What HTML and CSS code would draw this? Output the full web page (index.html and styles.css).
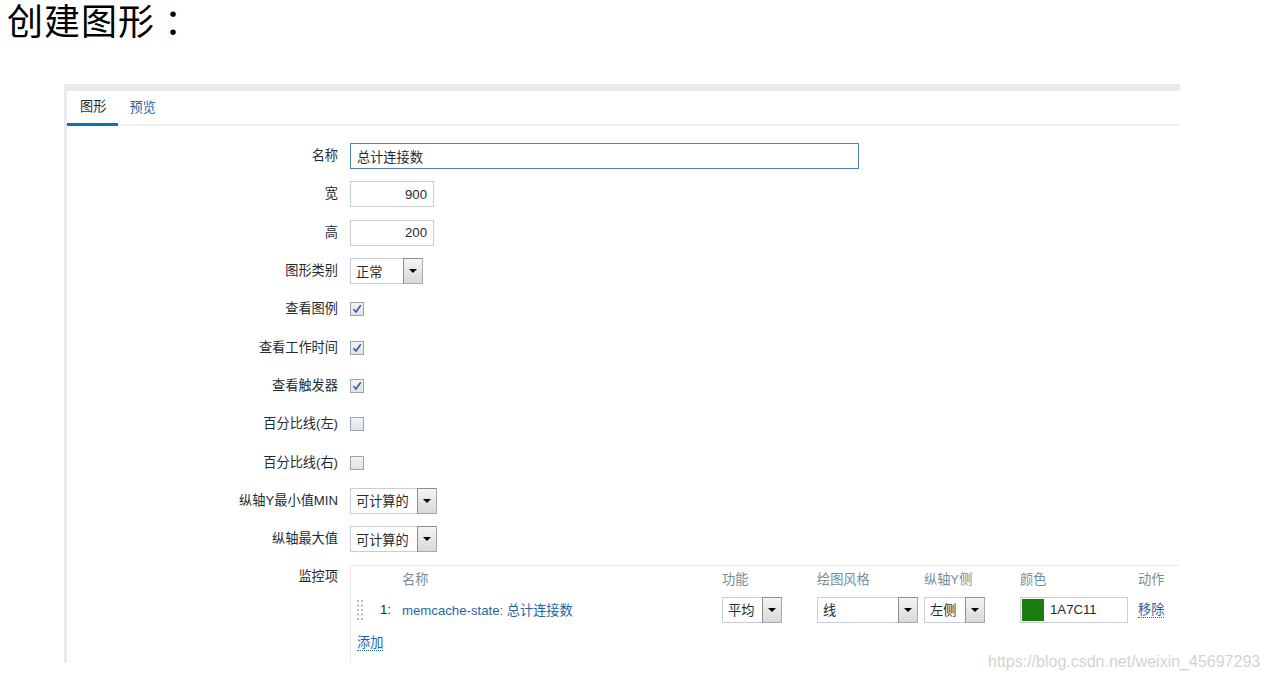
FILE: index.html
```html
<!DOCTYPE html>
<html lang="zh">
<head>
<meta charset="utf-8">
<title>创建图形</title>
<link rel="stylesheet" href="styles.css">
</head>
<body>
<h1 class="title">创建图形<span class="colon">：</span></h1>

<div class="frame">
  <div class="tabs">
    <span class="tab active">图形</span>
    <span class="tab link">预览</span>
  </div>

  <div class="form">
    <div class="row">
      <label class="lbl">名称</label>
      <div class="field"><span class="input name focus">总计连接数</span></div>
    </div>
    <div class="row">
      <label class="lbl">宽</label>
      <div class="field"><span class="input num">900</span></div>
    </div>
    <div class="row">
      <label class="lbl">高</label>
      <div class="field"><span class="input num">200</span></div>
    </div>
    <div class="row">
      <label class="lbl">图形类别</label>
      <div class="field"><span class="select w73"><span class="sv">正常</span><span class="btn"></span></span></div>
    </div>
    <div class="row">
      <label class="lbl">查看图例</label>
      <div class="field"><span class="cb checked"><svg viewBox="0 0 10 10"><path d="M1.5 5.2 L4 8 L8.8 1.2" fill="none" stroke="#3b57a3" stroke-width="1.6"/></svg></span></div>
    </div>
    <div class="row">
      <label class="lbl">查看工作时间</label>
      <div class="field"><span class="cb checked"><svg viewBox="0 0 10 10"><path d="M1.5 5.2 L4 8 L8.8 1.2" fill="none" stroke="#3b57a3" stroke-width="1.6"/></svg></span></div>
    </div>
    <div class="row">
      <label class="lbl">查看触发器</label>
      <div class="field"><span class="cb checked"><svg viewBox="0 0 10 10"><path d="M1.5 5.2 L4 8 L8.8 1.2" fill="none" stroke="#3b57a3" stroke-width="1.6"/></svg></span></div>
    </div>
    <div class="row">
      <label class="lbl">百分比线(左)</label>
      <div class="field"><span class="cb"></span></div>
    </div>
    <div class="row">
      <label class="lbl">百分比线(右)</label>
      <div class="field"><span class="cb"></span></div>
    </div>
    <div class="row">
      <label class="lbl">纵轴Y最小值MIN</label>
      <div class="field"><span class="select w87"><span class="sv">可计算的</span><span class="btn"></span></span></div>
    </div>
    <div class="row">
      <label class="lbl">纵轴最大值</label>
      <div class="field"><span class="select w87"><span class="sv">可计算的</span><span class="btn"></span></span></div>
    </div>
    <div class="row items-row">
      <label class="lbl top">监控项</label>
      <div class="items">
        <div class="grid head">
          <span></span><span></span>
          <span>名称</span>
          <span>功能</span>
          <span>绘图风格</span>
          <span>纵轴Y侧</span>
          <span>颜色</span>
          <span>动作</span>
        </div>
        <div class="grid item">
          <span class="drag"><svg viewBox="0 0 6 20" width="6" height="20"><g fill="#b4bcc2"><rect x="0" y="0" width="2" height="2"/><rect x="4" y="0" width="2" height="2"/><rect x="0" y="4.5" width="2" height="2"/><rect x="4" y="4.5" width="2" height="2"/><rect x="0" y="9" width="2" height="2"/><rect x="4" y="9" width="2" height="2"/><rect x="0" y="13.5" width="2" height="2"/><rect x="4" y="13.5" width="2" height="2"/><rect x="0" y="18" width="2" height="2"/><rect x="4" y="18" width="2" height="2"/></g></svg></span>
          <span class="no">1:</span>
          <span class="link">memcache-state: 总计连接数</span>
          <span class="select w59"><span class="sv">平均</span><span class="btn"></span></span>
          <span class="select w100"><span class="sv">线</span><span class="btn"></span></span>
          <span class="select w60"><span class="sv">左侧</span><span class="btn"></span></span>
          <span class="color"><span class="swatch"></span><span class="cv">1A7C11</span></span>
          <span class="link dotted">移除</span>
        </div>
        <div class="add"><span class="link dotted">添加</span></div>
      </div>
    </div>
  </div>
</div>

<div class="watermark">https://blog.csdn.net/weixin_45697293</div>
</body>
</html>
```

FILE: styles.css
```css
* { box-sizing: border-box; }

body {
  margin: 0;
  background: #ffffff;
  font-family: "Liberation Sans", "Noto Sans CJK SC", sans-serif;
  font-size: 13.2px;
  color: #1f2c33;
  position: relative;
  width: 1269px;
  height: 680px;
  overflow: hidden;
}

.title {
  margin: 0;
  padding-left: 7px;
  font-family: "Liberation Sans", "Noto Sans CJK SC", sans-serif;
  font-weight: normal;
  font-size: 36px;
  line-height: 46px;
  height: 46px;
  color: #000;
  letter-spacing: 1px;
}

.colon { margin-left: 9px; }

.frame {
  margin: 38px 0 0 64px;
  width: 1116px;
  height: 579px;
  border-top: 7px solid #e8ebee;
  border-left: 3px solid #e8ebee;
  display: flex;
  flex-direction: column;
}

.tabs {
  display: flex;
  height: 35px;
  border-bottom: 2px solid #eff0f1;
}

.tab {
  display: flex;
  align-items: center;
  padding: 0 10px 0 11px;
  height: 33px;
  line-height: 16px;
}

.tab.active {
  border-bottom: 3px solid #0275b8;
  height: 35px;
  margin-bottom: -2px;
  padding: 0 12px 1px 13px;
  color: #1f2c33;
}

.link { color: #1f65a6; }

.form {
  padding-top: 11px;
  flex: 1;
  display: flex;
  flex-direction: column;
}

.row {
  display: grid;
  grid-template-columns: 271px 1fr;
  column-gap: 12px;
  height: 38.3px;
  align-items: center;
}

.lbl {
  text-align: right;
  line-height: 16px;
}

.lbl.top { align-self: start; padding-top: 11px; }

.field { display: flex; align-items: center; }

.input {
  display: flex;
  align-items: center;
  height: 26px;
  border: 1px solid #c7cfd4;
  padding: 0 6px;
  background: #fff;
}

.input.name { width: 509px; }
.input.focus { border-color: #4a84b8; }
.input.num { width: 84px; justify-content: flex-end; }

.select {
  display: inline-flex;
  align-items: stretch;
  height: 26px;
  border: 1px solid #c7cfd4;
  background: #fff;
}

.select .sv {
  flex: 1;
  display: flex;
  align-items: center;
  padding-left: 5px;
  white-space: nowrap;
}

.select .btn {
  width: 20px;
  border: 1px solid #8d8d8d;
  border-right-color: #a9a9a9;
  border-bottom-color: #a9a9a9;
  background: linear-gradient(#f4f4f4, #d9d9d9);
  display: flex;
  align-items: center;
  justify-content: center;
  margin: -1px -1px -1px 0;
}

.select .btn::after {
  content: "";
  border-left: 4px solid transparent;
  border-right: 4px solid transparent;
  border-top: 4px solid #000;
}

.w73 { width: 73px; }
.w87 { width: 87px; }
.w59 { width: 60px; }
.w60 { width: 61px; }
.w100 { width: 101px; }

.cb {
  width: 14px;
  height: 14px;
  border: 1px solid #9aa4ab;
  background: linear-gradient(#f1f3f5, #dfe3e7);
  display: flex;
  align-items: center;
  justify-content: center;
}

.cb svg { width: 10px; height: 10px; }

.items-row { height: auto; flex: 1; align-items: stretch; }

.items {
  margin-top: 6.7px;
  border-top: 1px solid #e8ecee;
  border-left: 1px solid #e8ecee;
  padding: 6px 0 0 6px;
}

.grid {
  display: grid;
  grid-template-columns: 23px 22px 320px 95px 107px 96px 118px auto;
  align-items: center;
}

.head { color: #768d99; line-height: 16px; }

.item { margin-top: 9px; height: 26px; }

.drag { display: flex; align-items: center; }
.drag svg { display: block; }

.no { color: #1f2c33; }

.color {
  display: flex;
  align-items: center;
  width: 108px;
  height: 26px;
  border: 1px solid #c7cfd4;
  padding: 1px;
}

.swatch {
  width: 22px;
  height: 22px;
  background: #1a7c11;
}

.cv { padding-left: 6px; }

.dotted {
  border-bottom: 1px dotted #1f65a6;
  line-height: 15px;
  justify-self: start;
}

.add { margin-top: 12px; line-height: 16px; }
.add .dotted { display: inline-block; }

.watermark {
  position: absolute;
  left: 988px;
  top: 651px;
  font-size: 16px;
  line-height: 22px;
  color: #d3d3d3;
  font-family: "Liberation Sans", sans-serif;
}
```
